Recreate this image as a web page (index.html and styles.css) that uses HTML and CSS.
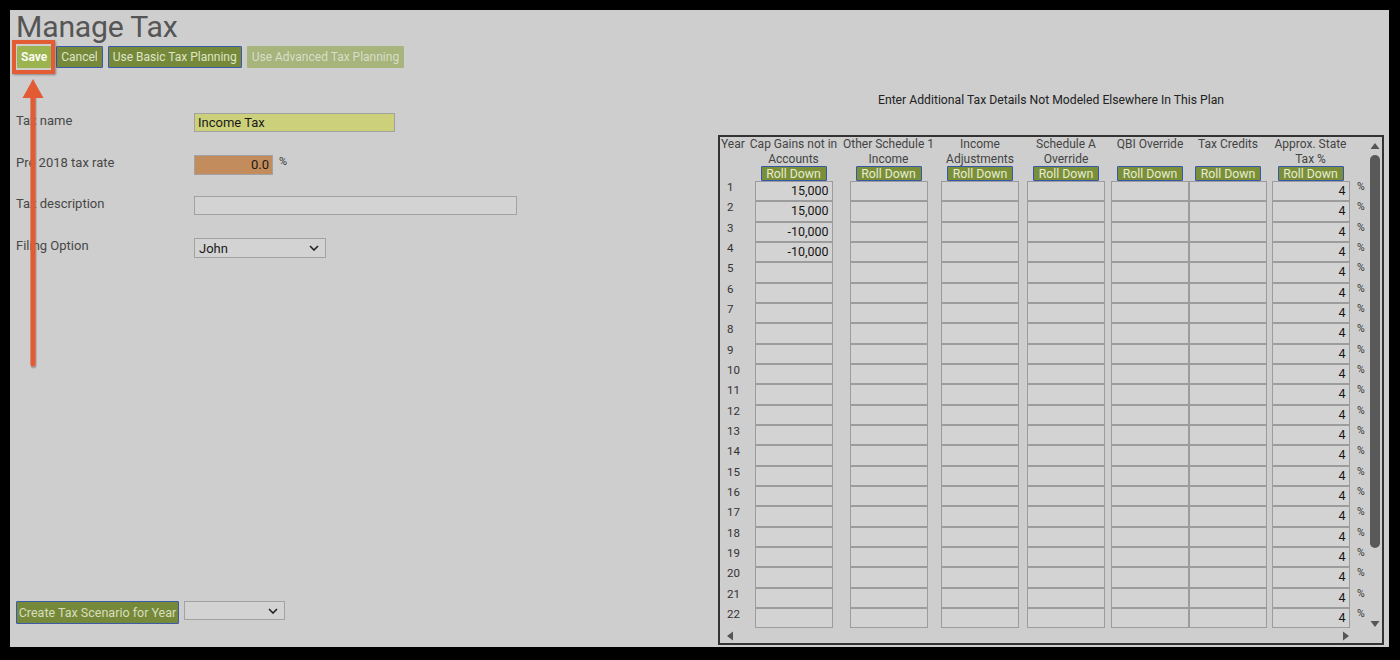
FILE: index.html
```html
<!DOCTYPE html>
<html>
<head>
<meta charset="utf-8">
<link rel="stylesheet" href="styles.css">
</head>
<body>
<div class="frame">
  <div class="left">
    <h1 class="title">Manage Tax</h1>
    <div class="btnrow">
      <button class="btn save">Save</button>
      <button class="btn">Cancel</button>
      <button class="btn">Use Basic Tax Planning</button>
      <button class="btn disabled">Use Advanced Tax Planning</button>
    </div>
    <div class="form">
      <div class="lbl">Tax name</div>
      <div class="field"><div class="txt name">Income Tax</div></div>
      <div class="lbl">Pre 2018 tax rate</div>
      <div class="field"><div class="txt rate">0.0</div><span class="unit">%</span></div>
      <div class="lbl">Tax description</div>
      <div class="field"><div class="txt desc"></div></div>
      <div class="lbl">Filing Option</div>
      <div class="field"><div class="sel filing"><span>John</span><svg width="10" height="6" viewBox="0 0 10 6"><path d="M1 1 L5 5 L9 1" fill="none" stroke="#222" stroke-width="1.6"/></svg></div></div>
    </div>
    <div class="bottomrow">
      <button class="btn create">Create Tax Scenario for Year</button>
      <div class="sel year"><span></span><svg width="10" height="6" viewBox="0 0 10 6"><path d="M1 1 L5 5 L9 1" fill="none" stroke="#222" stroke-width="1.6"/></svg></div>
    </div>
    <div class="hilite"></div>
    <svg class="arrow" width="26" height="292" viewBox="0 0 26 292">
      <path d="M12 14 L12 285" stroke="#555" stroke-opacity="0.35" stroke-width="6" stroke-linecap="round" transform="translate(0.6,1.4)"/>
      <path d="M12 14 L12 285" stroke="#e25b33" stroke-width="5" stroke-linecap="round"/>
      <path d="M12 0 L22.5 19 L1.5 19 Z" fill="#e25b33"/>
    </svg>
  </div>
  <div class="right">
    <div class="heading">Enter Additional Tax Details Not Modeled Elsewhere In This Plan</div>
    <div class="tbox">
      <div class="grid">
        <div class="hd yearhd">Year</div>
        <div class="hd"><div class="ht">Cap Gains not in<br>Accounts</div><button class="roll">Roll Down</button></div>
        <div class="hd"><div class="ht">Other Schedule 1<br>Income</div><button class="roll">Roll Down</button></div>
        <div class="hd"><div class="ht">Income<br>Adjustments</div><button class="roll">Roll Down</button></div>
        <div class="hd"><div class="ht">Schedule A<br>Override</div><button class="roll">Roll Down</button></div>
        <div class="hd"><div class="ht">QBI Override</div><button class="roll">Roll Down</button></div>
        <div class="hd"><div class="ht">Tax Credits</div><button class="roll">Roll Down</button></div>
        <div class="hd"><div class="ht">Approx. State<br>Tax %</div><button class="roll">Roll Down</button></div>
        <div class="hd"></div>

        <div class="yr">1</div><div class="in">15,000</div><div class="in"></div><div class="in"></div><div class="in"></div><div class="in"></div><div class="in"></div><div class="in">4</div><div class="pct">%</div>
        <div class="yr">2</div><div class="in">15,000</div><div class="in"></div><div class="in"></div><div class="in"></div><div class="in"></div><div class="in"></div><div class="in">4</div><div class="pct">%</div>
        <div class="yr">3</div><div class="in">-10,000</div><div class="in"></div><div class="in"></div><div class="in"></div><div class="in"></div><div class="in"></div><div class="in">4</div><div class="pct">%</div>
        <div class="yr">4</div><div class="in">-10,000</div><div class="in"></div><div class="in"></div><div class="in"></div><div class="in"></div><div class="in"></div><div class="in">4</div><div class="pct">%</div>
        <div class="yr">5</div><div class="in"></div><div class="in"></div><div class="in"></div><div class="in"></div><div class="in"></div><div class="in"></div><div class="in">4</div><div class="pct">%</div>
        <div class="yr">6</div><div class="in"></div><div class="in"></div><div class="in"></div><div class="in"></div><div class="in"></div><div class="in"></div><div class="in">4</div><div class="pct">%</div>
        <div class="yr">7</div><div class="in"></div><div class="in"></div><div class="in"></div><div class="in"></div><div class="in"></div><div class="in"></div><div class="in">4</div><div class="pct">%</div>
        <div class="yr">8</div><div class="in"></div><div class="in"></div><div class="in"></div><div class="in"></div><div class="in"></div><div class="in"></div><div class="in">4</div><div class="pct">%</div>
        <div class="yr">9</div><div class="in"></div><div class="in"></div><div class="in"></div><div class="in"></div><div class="in"></div><div class="in"></div><div class="in">4</div><div class="pct">%</div>
        <div class="yr">10</div><div class="in"></div><div class="in"></div><div class="in"></div><div class="in"></div><div class="in"></div><div class="in"></div><div class="in">4</div><div class="pct">%</div>
        <div class="yr">11</div><div class="in"></div><div class="in"></div><div class="in"></div><div class="in"></div><div class="in"></div><div class="in"></div><div class="in">4</div><div class="pct">%</div>
        <div class="yr">12</div><div class="in"></div><div class="in"></div><div class="in"></div><div class="in"></div><div class="in"></div><div class="in"></div><div class="in">4</div><div class="pct">%</div>
        <div class="yr">13</div><div class="in"></div><div class="in"></div><div class="in"></div><div class="in"></div><div class="in"></div><div class="in"></div><div class="in">4</div><div class="pct">%</div>
        <div class="yr">14</div><div class="in"></div><div class="in"></div><div class="in"></div><div class="in"></div><div class="in"></div><div class="in"></div><div class="in">4</div><div class="pct">%</div>
        <div class="yr">15</div><div class="in"></div><div class="in"></div><div class="in"></div><div class="in"></div><div class="in"></div><div class="in"></div><div class="in">4</div><div class="pct">%</div>
        <div class="yr">16</div><div class="in"></div><div class="in"></div><div class="in"></div><div class="in"></div><div class="in"></div><div class="in"></div><div class="in">4</div><div class="pct">%</div>
        <div class="yr">17</div><div class="in"></div><div class="in"></div><div class="in"></div><div class="in"></div><div class="in"></div><div class="in"></div><div class="in">4</div><div class="pct">%</div>
        <div class="yr">18</div><div class="in"></div><div class="in"></div><div class="in"></div><div class="in"></div><div class="in"></div><div class="in"></div><div class="in">4</div><div class="pct">%</div>
        <div class="yr">19</div><div class="in"></div><div class="in"></div><div class="in"></div><div class="in"></div><div class="in"></div><div class="in"></div><div class="in">4</div><div class="pct">%</div>
        <div class="yr">20</div><div class="in"></div><div class="in"></div><div class="in"></div><div class="in"></div><div class="in"></div><div class="in"></div><div class="in">4</div><div class="pct">%</div>
        <div class="yr">21</div><div class="in"></div><div class="in"></div><div class="in"></div><div class="in"></div><div class="in"></div><div class="in"></div><div class="in">4</div><div class="pct">%</div>
        <div class="yr">22</div><div class="in"></div><div class="in"></div><div class="in"></div><div class="in"></div><div class="in"></div><div class="in"></div><div class="in">4</div><div class="pct">%</div>
      </div>
      <div class="vscroll">
        <svg width="10" height="8" viewBox="0 0 10 8" class="tri"><path d="M5 1 L9.5 7 L0.5 7 Z" fill="#555"/></svg>
        <div class="thumb"></div>
        <div class="vspace"></div>
        <svg width="10" height="8" viewBox="0 0 10 8" class="tri"><path d="M0.5 1 L9.5 1 L5 7 Z" fill="#555"/></svg>
      </div>
      <div class="hscroll">
        <svg width="8" height="10" viewBox="0 0 8 10"><path d="M7 0.5 L7 9.5 L1 5 Z" fill="#555"/></svg>
        <svg width="8" height="10" viewBox="0 0 8 10"><path d="M1 0.5 L1 9.5 L7 5 Z" fill="#555"/></svg>
      </div>
      <div class="corner"></div>
    </div>
  </div>
</div>
</body>
</html>
```

FILE: styles.css
```css
* { box-sizing: border-box; }
html, body { margin: 0; padding: 0; }
body {
  background: #000;
  font-family: Roboto, "Liberation Sans", sans-serif;
  width: 1400px;
  height: 660px;
  overflow: hidden;
}
.frame {
  margin: 10px 11px 13px 10px;
  width: 1379px;
  height: 637px;
  background: #cecece;
  display: flex;
  position: relative;
}
.left {
  width: 708px;
  padding: 2px 0 23px 6px;
  display: flex;
  flex-direction: column;
  position: relative;
}
.title {
  margin: 0;
  font-size: 30.2px;
  font-weight: 400;
  line-height: 30px;
  color: #555;
  letter-spacing: -0.2px;
}
.btnrow {
  display: flex;
  gap: 5px;
  margin-top: 4px;
  padding-left: 1px;
}
.btn {
  font-family: Roboto, "Liberation Sans", sans-serif;
  font-size: 12px;
  height: 22px;
  padding: 0 4px;
  background: #76893a;
  color: #dfe6c8;
  border: 1px solid #3a5ca8;
  border-radius: 1px;
  line-height: 20px;
  margin: 0;
}
.btn.save {
  background: #9bb450;
  color: #fafaf0;
  font-weight: 700;
  border-color: #9bb450;
  padding: 0 3px;
}
.btn.disabled {
  background: #a7b47c;
  color: #d9dec9;
  border-color: #a7b47c;
}
.form {
  display: grid;
  grid-template-columns: 178px auto;
  grid-auto-rows: 20px;
  row-gap: 21.7px;
  margin-top: 45px;
}
.lbl {
  font-size: 13px;
  color: #474747;
  line-height: 15px;
}
.field {
  display: flex;
  align-items: flex-start;
}
.txt {
  height: 20px;
  border: 1px solid #a2a2a2;
  background: #d3d3d3;
  font-size: 13px;
  line-height: 18px;
  padding: 0 3px;
  color: #1a1a1a;
}
.txt.name { width: 201px; background: #cdd07b; height: 19px; }
.txt.rate { width: 79px; background: #c38c5c; text-align: right; }
.txt.desc { width: 323px; height: 19px; }
.unit { font-size: 11px; color: #333; margin-left: 6px; line-height: 14px; }
.sel {
  display: flex;
  align-items: center;
  justify-content: space-between;
  border: 1px solid #a2a2a2;
  background: #d3d3d3;
  font-size: 13px;
  color: #1a1a1a;
  padding: 0 6px 0 4px;
}
.sel.filing { width: 132px; height: 20px; }
.sel.year { width: 101px; height: 19px; }
.bottomrow {
  margin-top: auto;
  display: flex;
  gap: 5px;
  align-items: flex-start;
}
.btn.create {
  width: 163px;
  height: 23px;
  padding: 0;
  font-size: 12.5px;
  color: #d6dfbd;
  border-width: 1.5px;
}
.hilite {
  position: absolute;
  left: 2px;
  top: 30px;
  width: 43px;
  height: 34px;
  border: 4px solid #e45c33;
  box-shadow: 1px 1px 2px rgba(0,0,0,0.35);
}
.arrow {
  position: absolute;
  left: 11px;
  top: 69px;
}
.right {
  flex: 1;
  display: flex;
  flex-direction: column;
  align-items: flex-start;
}
.heading {
  width: 666px;
  text-align: center;
  font-size: 12.2px;
  color: #222;
  line-height: 16px;
  margin-top: 82px;
}
.tbox {
  margin-top: 27px;
  width: 666px;
  height: 510px;
  border: 2px solid #333;
  display: grid;
  grid-template-columns: 648px 14px;
  grid-template-rows: 491px 15px;
}
.grid {
  display: grid;
  grid-template-columns: 29px 89px 101px 82px 90px 78px 78px 87px 14px;
  grid-template-rows: 44px;
  grid-auto-rows: 20.33px;
  align-content: start;
}
.hd {
  display: flex;
  flex-direction: column;
  align-items: center;
  font-size: 12px;
  color: #444;
  line-height: 14.5px;
  text-align: center;
}
.hd.yearhd { align-items: flex-start; padding-left: 1px; }
.ht { height: 29px; white-space: nowrap; }
.roll {
  font-family: Roboto, "Liberation Sans", sans-serif;
  font-size: 12.3px;
  width: 66px;
  height: 15px;
  padding: 0;
  margin: 0;
  line-height: 12px;
  background: #7a8f38;
  color: #e6ecd4;
  border: 1.5px solid #3557a8;
  border-radius: 1px;
}
.yr {
  font-size: 11.5px;
  color: #333;
  padding: 0 0 0 7px;
  line-height: 12px;
}
.in {
  width: 78px;
  justify-self: center;
  border: 1px solid #9c9c9c;
  border-top-width: 1.2px;
  background: #d3d3d3;
  text-align: right;
  font-size: 12.5px;
  line-height: 18.5px;
  padding-right: 3px;
  color: #151515;
}
.pct {
  font-size: 10.5px;
  color: #333;
  padding: 1px 0 0 3px;
  line-height: 10px;
}
.vscroll {
  display: flex;
  flex-direction: column;
  align-items: center;
  padding-top: 5px;
}
.tri { flex: none; }
.thumb {
  width: 10px;
  height: 393px;
  margin-top: 5px;
  border-radius: 5px;
  background: #595959;
}
.vspace { flex: 1; }
.hscroll {
  display: flex;
  justify-content: space-between;
  align-items: center;
  padding: 0 18px 0 6px;
}
.corner {}
```
